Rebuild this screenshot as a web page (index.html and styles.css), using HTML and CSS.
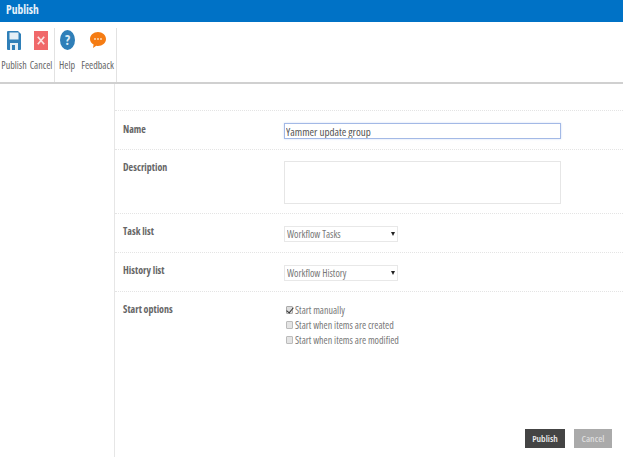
FILE: index.html
```html
<!DOCTYPE html>
<html lang="en">
<head>
<meta charset="utf-8">
<title>Publish</title>
<link rel="stylesheet" href="styles.css">
</head>
<body>
<header class="titlebar">Publish</header>
<nav class="ribbon">
  <div class="group">
    <button class="tool tool-publish">
      <svg class="icon" viewBox="0 0 14 19" width="14" height="19"><path fill="#2f7fb8" d="M1 0h10l3 3v15a1 1 0 0 1-1 1H1a1 1 0 0 1-1-1V1a1 1 0 0 1 1-1z"/><rect x="2.500" y="1.500" width="9" height="7" fill="#e4eff6"/><rect x="3" y="12" width="8" height="7" fill="#e4eff6"/><rect x="5" y="14" width="3" height="5" fill="#2f7fb8"/></svg>
      <span>Publish</span>
    </button>
    <button class="tool tool-cancel">
      <svg class="icon" viewBox="0 0 14 19" width="14" height="19"><rect width="14" height="19" fill="#f0686a"/><path d="M3.800 5.800l6.400 7.400M10.200 5.800l-6.400 7.400" stroke="#fbe3e3" stroke-width="1.700" fill="none"/></svg>
      <span>Cancel</span>
    </button>
  </div>
  <div class="group">
    <button class="tool tool-help">
      <svg class="icon" viewBox="0 0 15 20" width="15" height="20"><ellipse cx="7.500" cy="10" rx="7.500" ry="10" fill="#2f7fb8"/><text x="7.500" y="15" text-anchor="middle" class="qmark">?</text></svg>
      <span>Help</span>
    </button>
    <button class="tool tool-feedback">
      <svg class="icon" viewBox="0 0 16 16" width="16" height="16"><path fill="#f57c13" d="M8 0c4.400 0 8 3 8 7s-3.600 7-8 7c-.6 0-1.200-.1-1.700-.2L3 16l.6-3.400C1.400 11.300 0 9.300 0 7c0-4 3.600-7 8-7z"/><circle cx="5" cy="7" r=".9" fill="#fde3c8"/><circle cx="8" cy="7" r=".9" fill="#fde3c8"/><circle cx="11" cy="7" r=".9" fill="#fde3c8"/></svg>
      <span>Feedback</span>
    </button>
  </div>
</nav>
<div class="main">
  <aside class="side"></aside>
  <form class="content">
    <div class="row row-name">
      <label class="label">Name</label>
      <div class="field"><input class="text focus" type="text" value="Yammer update group"></div>
    </div>
    <div class="row row-desc">
      <label class="label">Description</label>
      <div class="field"><textarea class="area"></textarea></div>
    </div>
    <div class="row row-list">
      <label class="label">Task list</label>
      <div class="field"><div class="select"><select><option>Workflow Tasks</option></select></div></div>
    </div>
    <div class="row row-list">
      <label class="label">History list</label>
      <div class="field"><div class="select"><select><option>Workflow History</option></select></div></div>
    </div>
    <div class="row row-start">
      <label class="label">Start options</label>
      <div class="field options">
        <label class="opt"><input type="checkbox" checked>Start manually</label>
        <label class="opt"><input type="checkbox">Start when items are created</label>
        <label class="opt"><input type="checkbox">Start when items are modified</label>
      </div>
    </div>
    <div class="actions">
      <button type="button" class="btn btn-dark">Publish</button>
      <button type="button" class="btn btn-grey">Cancel</button>
    </div>
  </form>
</div>
</body>
</html>
```
FILE: styles.css
```css
* { box-sizing: border-box; }
html, body { height: 100%; }
body {
  margin: 0;
  display: flex;
  flex-direction: column;
  background: #fff;
  font-family: "Open Sans", "Liberation Sans", sans-serif;
  font-stretch: 75%;
  font-size: 10px;
  color: #666;
  overflow: hidden;
}
.titlebar {
  height: 22px;
  flex: none;
  background: #0072c6;
  color: #e8f2fa;
  font-weight: 700;
  font-size: 11.500px;
  line-height: 20px;
  padding-left: 6px;
}
.ribbon {
  height: 62px;
  flex: none;
  display: flex;
  border-bottom: 2px solid #d0d0d0;
}
.group {
  display: flex;
  height: 54px;
  margin-top: 6px;
  border-right: 1px solid #e2e2e2;
}
.tool {
  border: 0;
  background: none;
  padding: 0;
  font: inherit;
  color: #666;
  display: flex;
  flex-direction: column;
  align-items: center;
  position: relative;
}
.tool .icon { display: block; flex: none; margin-top: 3px; }
.tool span { position: absolute; top: 31px; left: 0; right: 0; text-align: center; line-height: 13px; }
.tool-publish { width: 28px; }
.tool-cancel { width: 26px; padding-right: 1px; }
.tool-help { width: 24px; }
.tool-feedback { width: 37px; }
.tool-help .icon { margin-top: 2px; }
.tool-feedback .icon { margin-top: 4px; }
.qmark { font-size: 14px; font-weight: 700; fill: #dcebf5; font-family: "Open Sans", sans-serif; }
.main { flex: 1; display: flex; min-height: 0; }
.side { width: 115px; flex: none; border-right: 1px solid #e6e6e6; }
.content { flex: 1; display: flex; flex-direction: column; padding-top: 26px; }
.row {
  display: flex;
  padding-left: 8px;
  border-top: 1px dotted #e4e4e4;
}
.label { width: 161px; flex: none; font-weight: 700; font-size: 10px; color: #666; line-height: 13px; }
.row-name { height: 39px; padding-top: 12px; }
.row-desc { height: 64px; padding-top: 11px; }
.row-list { height: 39px; padding-top: 11px; }
.row-start { height: 70px; padding-top: 11px; }
.text {
  display: block;
  width: 277px;
  height: 16px;
  padding: 0 1px;
  border: 1px solid #a3b9e6;
  box-shadow: 0 0 2px #cfdcf5;
  font: inherit;
  font-size: 11px;
  color: #555;
  outline: 0;
}
.area {
  display: block;
  width: 277px;
  height: 43px;
  border: 1px solid #e6e6e6;
  resize: none;
  outline: 0;
  margin: 0;
}
.select { position: relative; width: 114px; height: 16px; margin-top: 1px; }
.select::after {
  content: "";
  position: absolute;
  right: 3px;
  top: 6px;
  border-left: 2px solid transparent;
  border-right: 2px solid transparent;
  border-top: 4px solid #222;
}
.select select {
  appearance: none;
  display: block;
  width: 100%;
  height: 100%;
  padding: 0 0 0 2px;
  border: 1px solid #e8e8e8;
  border-radius: 0;
  background: #fff;
  font: inherit;
  color: #777;
  outline: 0;
}
.options { display: flex; flex-direction: column; gap: 2px; margin-top: 0; }
.opt { display: flex; align-items: center; height: 13px; color: #777; }
.opt input {
  appearance: none;
  width: 7px;
  height: 8px;
  margin: 1px 2px 0 2px;
  border: 1px solid #bbb;
  background: #e4e4e4;
  border-radius: 1px;
  position: relative;
}
.opt input:checked { background: #ddd; border-color: #aaa; }
.opt input:checked::after {
  content: "";
  position: absolute;
  left: 1px;
  top: -1px;
  width: 3px;
  height: 6px;
  border: solid #333;
  border-width: 0 1.500px 1.500px 0;
  transform: rotate(40deg);
}
.actions {
  margin-top: auto;
  display: flex;
  justify-content: flex-end;
  gap: 9px;
  padding: 0 11px 9px 0;
}
.btn {
  width: 40px;
  height: 19px;
  padding: 0;
  border: 0;
  font: inherit;
  font-size: 9.500px;
  font-weight: 600;
  color: #eee;
}
.btn-dark { background: #444; }
.btn-grey { background: #aaa; width: 38px; color: #ddd; }
```
